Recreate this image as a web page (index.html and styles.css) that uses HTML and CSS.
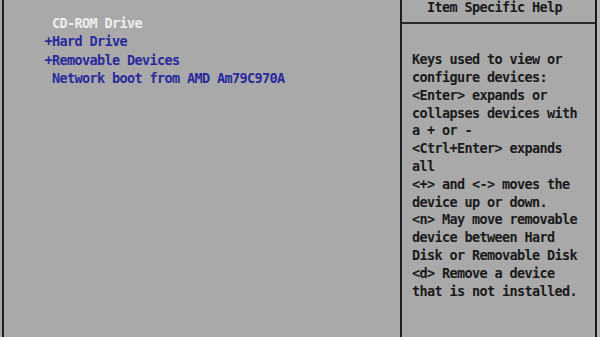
FILE: index.html
```html
<!DOCTYPE html>
<html>
<head>
<meta charset="utf-8">
<link rel="stylesheet" href="styles.css">
</head>
<body>
<div class="screen">
  <div class="main">
    <div class="list">
      <div class="item selected"> CD-ROM Drive</div>
      <div class="item">+Hard Drive</div>
      <div class="item">+Removable Devices</div>
      <div class="item"> Network boot from AMD Am79C970A</div>
    </div>
  </div>
  <div class="help">
    <div class="help-title">Item Specific Help</div>
    <div class="help-body">
      <div class="line">Keys used to view or</div>
      <div class="line">configure devices:</div>
      <div class="line">&lt;Enter&gt; expands or</div>
      <div class="line">collapses devices with</div>
      <div class="line">a + or -</div>
      <div class="line">&lt;Ctrl+Enter&gt; expands</div>
      <div class="line">all</div>
      <div class="line">&lt;+&gt; and &lt;-&gt; moves the</div>
      <div class="line">device up or down.</div>
      <div class="line">&lt;n&gt; May move removable</div>
      <div class="line">device between Hard</div>
      <div class="line">Disk or Removable Disk</div>
      <div class="line">&lt;d&gt; Remove a device</div>
      <div class="line">that is not installed.</div>
    </div>
  </div>
  <div class="edge"></div>
</div>
</body>
</html>
```

FILE: styles.css
```css
html, body {
  margin: 0;
  padding: 0;
  background: #a9a9a9;
}
.screen {
  width: 600px;
  height: 337px;
  display: flex;
  overflow: hidden;
  font-family: "DejaVu Sans Mono", "Liberation Mono", monospace;
  font-size: 13.5px;
  font-weight: bold;
  letter-spacing: -0.63px;
  color: #1a1a1a;
}
.main {
  box-sizing: border-box;
  margin-left: 2px;
  width: 400px;
  flex: none;
  border-left: 2px solid #1e1e1e;
  border-right: 2px solid #1e1e1e;
  padding-left: 40.5px;
  padding-top: 14px;
}
.item {
  white-space: pre;
  line-height: 18.3px;
  color: #2a2a9c;
}
.item.selected {
  color: #eeeeee;
}
.help {
  box-sizing: border-box;
  width: 195px;
  flex: none;
  border-right: 2px solid #1a1a1a;
  display: flex;
  flex-direction: column;
}
.help-title {
  white-space: pre;
  height: 22px;
  line-height: 14px;
  padding-left: 25px;
  border-bottom: 2px solid #2a2a2a;
}
.help-body {
  padding-top: 27.3px;
  padding-left: 10px;
  line-height: 17.8px;
}
.line {
  white-space: pre;
}
.edge {
  flex: 1;
  background: #b3b3b3;
}
```
